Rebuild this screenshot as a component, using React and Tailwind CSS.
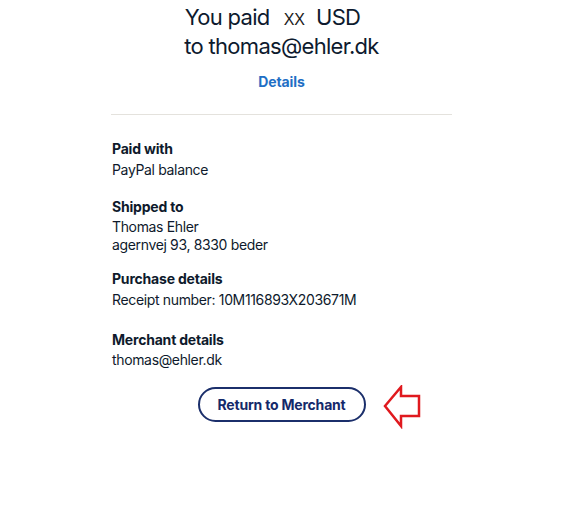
import React from "react";

export default function App() {
  return (
    <div className="w-[577px] h-[527px] bg-white overflow-hidden" style={{ fontFamily: "Inter, 'Noto Sans', sans-serif" }}>
      <div className="ml-[111px] w-[341px] flex flex-col">
        <div className="pt-[4px] text-center text-[22px] leading-[27px] tracking-[-0.7px] text-[#0d1a2e]">
          <div className="pr-[18px]">
            You paid
            <span className="inline-block ml-[14px] mr-[11px] text-[16px] tracking-normal text-[#1a1a1a] font-['Liberation_Sans',Arial,sans-serif]">XX</span>
            USD
          </div>
          <div>to thomas@ehler.dk</div>
        </div>
        <div className="mt-[12px] text-center text-[14px] leading-[20px] font-bold tracking-[-0.1px] text-[#1f6fc5]">Details</div>
        <div className="mt-[22px] h-[1px] bg-[#e4e2dd]"></div>

        <div className="mt-[24px] pl-[1px] text-[14px] leading-[20px] tracking-[-0.35px] text-[#0e1a2c]">
          <div className="font-bold tracking-[-0.2px]">Paid with</div>
          <div className="mt-[1px]">PayPal balance</div>

          <div className="mt-[17px] font-bold tracking-[-0.2px]">Shipped to</div>
          <div className="mt-[1px] leading-[18px]">Thomas Ehler</div>
          <div className="leading-[18px]">agernvej 93, 8330 beder</div>

          <div className="mt-[15px] font-bold tracking-[-0.2px]">Purchase details</div>
          <div className="mt-[1px]">Receipt number: 10M116893X203671M</div>

          <div className="mt-[20px] font-bold tracking-[-0.2px]">Merchant details</div>
          <div>thomas@ehler.dk</div>
        </div>

        <div className="mt-[17px] flex justify-center">
          <div className="relative">
            <button className="w-[168px] h-[35px] rounded-full border-2 border-[#1b2f6b] text-[14px] font-bold tracking-[-0.2px] text-[#14296a] bg-white">
              Return to Merchant
            </button>
            <svg className="absolute left-[185px] top-[-2px]" width="40" height="44" viewBox="0 0 40 44">
              <polygon
                points="2,21 18,2 18,11 36,11 36,31 18,31 18,41"
                fill="none"
                stroke="#e0191e"
                strokeWidth="2.5"
                strokeLinejoin="miter"
              />
            </svg>
          </div>
        </div>
      </div>
    </div>
  );
}
